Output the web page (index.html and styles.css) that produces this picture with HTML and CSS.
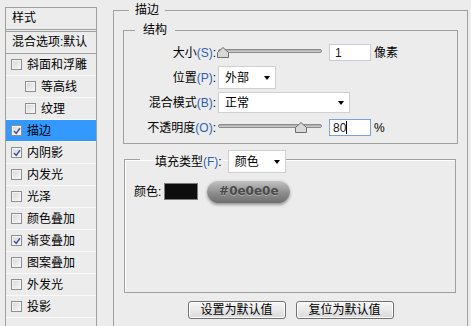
FILE: index.html
```html
<!DOCTYPE html>
<html lang="zh-CN">
<head>
    <meta charset="UTF-8">
    <meta name="viewport" content="width=device-width, initial-scale=1.0">
    <title>图层样式 - 描边</title>
    <link rel="stylesheet" href="styles.css">
</head>
<body>
    <div class="dialog">
        <ul class="style-list">
            <li class="list-head">样式</li>
            <li class="list-blend">混合选项:默认</li>
            <li class="item"><span class="check"></span>斜面和浮雕</li>
            <li class="item sub"><span class="check"></span>等高线</li>
            <li class="item sub"><span class="check"></span>纹理</li>
            <li class="item active"><span class="check"><svg viewBox="0 0 9 9"><path d="M1.2 4.6 L3.6 7.2 L7.8 1.4"/></svg></span>描边</li>
            <li class="item"><span class="check"><svg viewBox="0 0 9 9"><path d="M1.2 4.6 L3.6 7.2 L7.8 1.4"/></svg></span>内阴影</li>
            <li class="item"><span class="check"></span>内发光</li>
            <li class="item"><span class="check"></span>光泽</li>
            <li class="item"><span class="check"></span>颜色叠加</li>
            <li class="item"><span class="check"><svg viewBox="0 0 9 9"><path d="M1.2 4.6 L3.6 7.2 L7.8 1.4"/></svg></span>渐变叠加</li>
            <li class="item"><span class="check"></span>图案叠加</li>
            <li class="item"><span class="check"></span>外发光</li>
            <li class="item"><span class="check"></span>投影</li>
        </ul>

        <div class="panel">
            <fieldset class="group outer">
                <legend>描边</legend>

                <fieldset class="group struct">
                    <legend>结构</legend>

                    <div class="row">
                        <span class="label">大小<em>(S)</em>:</span>
                        <div class="slider">
                            <span class="track"></span>
                            <svg class="knob" style="left: -1px" viewBox="0 0 12 11"><path d="M6 0.5 L11.5 5.5 L11.5 10.5 L0.5 10.5 L0.5 5.5 Z"/></svg>
                        </div>
                        <span class="num">1</span>
                        <span class="unit">像素</span>
                    </div>

                    <div class="row">
                        <span class="label">位置<em>(P)</em>:</span>
                        <span class="select select-pos">外部<i class="arrow"></i></span>
                    </div>

                    <div class="row">
                        <span class="label">混合模式<em>(B)</em>:</span>
                        <span class="select select-mode">正常<i class="arrow"></i></span>
                    </div>

                    <div class="row">
                        <span class="label">不透明度<em>(O)</em>:</span>
                        <div class="slider">
                            <span class="track"></span>
                            <svg class="knob" style="left: 77px" viewBox="0 0 12 11"><path d="M6 0.5 L11.5 5.5 L11.5 10.5 L0.5 10.5 L0.5 5.5 Z"/></svg>
                        </div>
                        <span class="num focus">80<i class="caret"></i></span>
                        <span class="unit">%</span>
                    </div>
                </fieldset>

                <fieldset class="group fill">
                    <legend>
                        <span>填充类型<em>(F)</em>:</span>
                        <span class="select select-pos">颜色<i class="arrow"></i></span>
                    </legend>

                    <div class="color-row">
                        <span>颜色:</span>
                        <span class="swatch"></span>
                        <span class="pill">#0e0e0e</span>
                    </div>
                </fieldset>

                <div class="buttons">
                    <button class="btn">设置为默认值</button>
                    <button class="btn">复位为默认值</button>
                </div>
            </fieldset>
        </div>
    </div>
</body>
</html>
```

FILE: styles.css
```css
html, body {
    margin: 0;
    height: 326px;
    overflow: hidden;
}

body {
    background: #ececec;
    font-family: "Liberation Sans", "Noto Sans CJK SC", sans-serif;
    font-size: 12px;
    line-height: 14px;
    color: #000;
}

.dialog {
    display: flex;
    align-items: flex-start;
}

/* left style list */

.style-list {
    list-style: none;
    margin: 7px 0 0 5px;
    padding: 0;
    width: 90px;
    height: 330px;
    border: 1px solid #a0a0a0;
    border-bottom: 0;
}

.list-head {
    height: 21px;
    line-height: 21px;
    padding-left: 6px;
    border-bottom: 3px double #a0a0a0;
}

.list-blend {
    height: 21px;
    line-height: 21px;
    padding-left: 6px;
    border-bottom: 1px solid #a0a0a0;
}

.item {
    display: flex;
    align-items: center;
    height: 21px;
    padding-left: 5px;
    border-bottom: 1px solid #f9f9f9;
}

.item.sub {
    padding-left: 19px;
}

.item.active {
    background: #3399ff;
}

.check {
    width: 11px;
    height: 11px;
    box-sizing: border-box;
    margin-right: 5px;
    border: 1px solid #8e8e8e;
    background: linear-gradient(135deg, #d6d6d6, #f8f8f8);
    box-shadow: inset 0 0 0 1px #f4f4f4;
    display: flex;
    align-items: center;
    justify-content: center;
}

.check svg {
    width: 8px;
    height: 8px;
}

.check path {
    fill: none;
    stroke: #3f54a3;
    stroke-width: 1.7;
}

/* right panel */

.panel {
    margin-left: 16px;
}

.group {
    margin: 0;
    border: 1px solid #a0a0a0;
    min-inline-size: 0;
}

.group legend {
    line-height: 14px;
}

.outer {
    margin-top: 3px;
    width: 355px;
    box-sizing: border-box;
    padding: 6px 9px 40px 9px;
}

.outer > legend {
    margin-left: 6px;
    padding: 0 6px;
}

.struct {
    padding: 4px 0;
}

.struct > legend {
    margin-left: 11px;
    padding: 0 8px;
}

.row {
    display: flex;
    align-items: center;
    height: 23px;
}

.row + .row {
    margin-top: 2px;
}

.label {
    width: 92px;
    margin-right: 2px;
    text-align: right;
}

.label em,
.fill legend em {
    font-style: normal;
    color: #2f5fb3;
}

.slider {
    position: relative;
    width: 104px;
    height: 12px;
}

.track {
    display: block;
    margin-top: 2px;
    height: 4px;
    box-sizing: border-box;
    border: 1px solid #8c8c8c;
    border-radius: 2px;
    background: linear-gradient(#a9a9a9, #d2d2d2);
}

.knob {
    position: absolute;
    top: 0;
    width: 12px;
    height: 11px;
}

.knob path {
    fill: #d8d8d8;
    stroke: #6e6e6e;
    stroke-width: 1;
}

.num {
    display: flex;
    align-items: center;
    width: 42px;
    height: 17px;
    box-sizing: border-box;
    margin-left: 7px;
    padding-left: 5px;
    border: 1px solid #c6cdd7;
    background: #fff;
    color: #1a1a1a;
}

.num.focus {
    border-color: #7ea2cf;
    padding-left: 3px;
}

.caret {
    width: 1px;
    height: 13px;
    background: #000;
}

.unit {
    margin-left: 3px;
}

.select {
    display: flex;
    align-items: center;
    justify-content: space-between;
    height: 23px;
    box-sizing: border-box;
    padding: 0 5px 0 6px;
    border: 1px solid #d0d0d0;
    background: #fff;
}

.select-pos {
    width: 58px;
}

.select-mode {
    width: 132px;
    height: 21px;
}

.arrow {
    width: 0;
    height: 0;
    border-left: 3.5px solid transparent;
    border-right: 3.5px solid transparent;
    border-top: 4px solid #000;
}

.fill {
    margin: 1px 2px 0 1px;
    padding: 7px 0 89px 9px;
    box-shadow: inset 1px 1px 0 #fff;
}

.fill > legend {
    display: flex;
    align-items: center;
    gap: 6px;
    margin-left: 6px;
    padding: 5px 0 0 15px;
}

.color-row {
    display: flex;
    align-items: center;
    height: 23px;
}

.swatch {
    width: 34px;
    height: 17px;
    box-sizing: border-box;
    margin-left: 3px;
    border: 1px solid #7b7b7b;
    background: #0e0e0e;
}

.pill {
    width: 83px;
    height: 23px;
    margin-left: 9px;
    border-radius: 12px;
    background: linear-gradient(#c6c6c6, #8a8a8a 60%, #6e6e6e);
    box-shadow: 0 2px 3px rgba(0, 0, 0, 0.35), inset 0 1px 0 rgba(255, 255, 255, 0.5);
    font-family: "DejaVu Sans", sans-serif;
    font-weight: bold;
    font-size: 12px;
    line-height: 23px;
    text-align: center;
    color: #4a4a4a;
    text-shadow: 0 1px 0 rgba(255, 255, 255, 0.3);
}

.buttons {
    display: flex;
    justify-content: center;
    gap: 10px;
    margin-top: 8px;
}

.btn {
    width: 98px;
    height: 18px;
    padding: 0;
    border: 1px solid #707070;
    border-radius: 3px;
    background: linear-gradient(#f7f7f7, #dadada);
    box-shadow: inset 0 0 0 1px #fff;
    font-family: "Liberation Sans", "Noto Sans CJK SC", sans-serif;
    font-size: 12px;
    line-height: 16px;
    color: #000;
}
```
